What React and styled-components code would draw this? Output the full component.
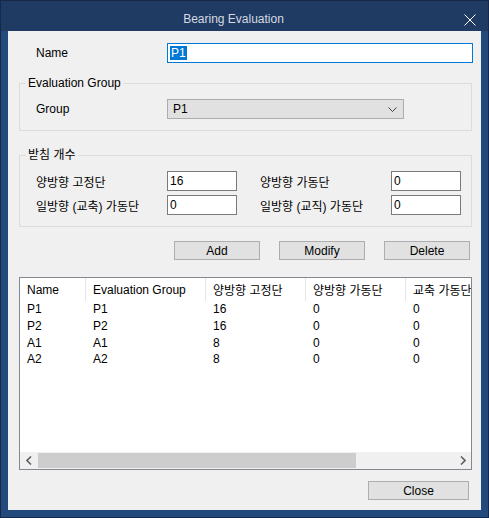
import styled, { createGlobalStyle } from 'styled-components';

const GlobalStyle = createGlobalStyle`
  html, body {
    margin: 0;
    padding: 0;
    background: #ffffff;
  }
  body {
    font-family: "Liberation Sans", "Noto Sans CJK KR", sans-serif;
    font-size: 12px;
    color: #000;
  }
`;

const Window = styled.div`
  width: 489px;
  height: 518px;
  box-sizing: border-box;
  border: 1px solid #16294a;
  background: #224a7c;
  display: flex;
  flex-direction: column;
`;

const TitleBar = styled.div`
  height: 30px;
  background: #1f3b64;
  display: flex;
  align-items: center;
  position: relative;
  padding-top: 5px;
  box-sizing: border-box;
`;

const Title = styled.div`
  flex: 1;
  text-align: center;
  color: #d6dae0;
  font-size: 12px;
  padding-right: 22px;
`;

const CloseX = styled.svg`
  position: absolute;
  right: 12px;
  top: 13px;
`;

const Body = styled.div`
  margin: 0 7px;
  height: 479px;
  background: #f0f0f0;
  display: flex;
  flex-direction: column;
`;

const NameRow = styled.div`
  display: grid;
  grid-template-columns: 131px 306px;
  align-items: center;
  margin-top: 12px;
  padding-left: 28px;
  height: 20px;
`;

const Label = styled.span`
  white-space: nowrap;
`;

const TextBox = styled.div`
  box-sizing: border-box;
  height: 20px;
  width: ${(p) => p.$w || 70}px;
  background: #fff;
  border: 1px solid ${(p) => (p.$focus ? '#0078d7' : '#7a7a7a')};
  display: flex;
  align-items: center;
  padding-left: 2px;
  line-height: 14px;
`;

const Selected = styled.span`
  background: #0078d7;
  color: #fff;
  padding: 0 1px;
`;

const GroupBox = styled.div`
  position: relative;
  margin: ${(p) => p.$top}px 0 0 11px;
  width: 453px;
  height: ${(p) => p.$h}px;
  box-sizing: border-box;
  border: 1px solid #dcdcdc;
  padding: 15px 0 0 16px;
`;

const Legend = styled.span`
  position: absolute;
  top: -8px;
  left: 6px;
  padding: 0 2px;
  line-height: 14px;
  background: #f0f0f0;
`;

const GroupRow = styled.div`
  display: grid;
  grid-template-columns: 131px 237px;
  align-items: center;
`;

const CountGrid = styled.div`
  display: grid;
  grid-template-columns: 131px 93px 131px 70px;
  row-gap: 4px;
  align-items: center;
`;

const Select = styled.div`
  box-sizing: border-box;
  height: 20px;
  background: #e1e1e1;
  border: 1px solid #adadad;
  display: flex;
  align-items: center;
  justify-content: space-between;
  padding: 0 6px 0 5px;
`;

const ButtonRow = styled.div`
  display: flex;
  justify-content: flex-end;
  gap: 19px;
  margin-top: 14px;
  padding-right: 11px;
`;

const Button = styled.div`
  box-sizing: border-box;
  width: ${(p) => p.$w || 86}px;
  height: 19px;
  background: #e1e1e1;
  border: 1px solid #adadad;
  display: flex;
  align-items: center;
  justify-content: center;
  line-height: 14px;
`;

const List = styled.div`
  margin: 17px 0 0 11px;
  width: 453px;
  height: 193px;
  box-sizing: border-box;
  border: 1px solid #828790;
  background: #fff;
  display: flex;
  flex-direction: column;
  overflow: hidden;
`;

const Columns = styled.div`
  display: grid;
  grid-template-columns: 66px 120px 100px 100px 100px;
  height: ${(p) => (p.$head ? 23 : 16.67)}px;
  align-items: center;
  white-space: nowrap;
`;

const Cell = styled.div`
  padding-left: 7px;
  height: 100%;
  display: flex;
  align-items: center;
  overflow: hidden;
  box-sizing: border-box;
  border-right: ${(p) => (p.$head ? '1px solid #e5e5e5' : 'none')};
`;

const Rows = styled.div`
  flex: 1;
`;

const ScrollBar = styled.div`
  display: grid;
  grid-template-columns: 17px 1fr 17px;
  height: 17px;
  background: #f0f0f0;
`;

const Arrow = styled.div`
  display: flex;
  align-items: center;
  justify-content: center;
`;

const Track = styled.div`
  padding: 1px 0 1px 1px;
  display: flex;
`;

const Thumb = styled.div`
  width: ${(p) => p.$w}px;
  background: #cdcdcd;
`;

const Footer = styled.div`
  display: flex;
  justify-content: flex-end;
  margin-top: 11px;
  padding-right: 12px;
`;

const rows = [
  ['P1', 'P1', '16', '0', '0'],
  ['P2', 'P2', '16', '0', '0'],
  ['A1', 'A1', '8', '0', '0'],
  ['A2', 'A2', '8', '0', '0'],
];

const headers = ['Name', 'Evaluation Group', '양방향 고정단', '양방향 가동단', '교축 가동단'];

export default function App() {
  return (
    <>
      <GlobalStyle />
      <Window>
        <TitleBar>
          <Title>Bearing Evaluation</Title>
          <CloseX width="12" height="12" viewBox="0 0 12 12">
            <path d="M0.5 0.5 L11.5 11.5 M11.5 0.5 L0.5 11.5" stroke="#ffffff" strokeWidth="1" fill="none" />
          </CloseX>
        </TitleBar>
        <Body>
          <NameRow>
            <Label>Name</Label>
            <TextBox $w={306} $focus>
              <Selected>P1</Selected>
            </TextBox>
          </NameRow>

          <GroupBox $top={20} $h={48}>
            <Legend>Evaluation Group</Legend>
            <GroupRow>
              <Label>Group</Label>
              <Select>
                <span>P1</span>
                <svg width="9" height="5" viewBox="0 0 9 5">
                  <polyline points="0.5,0.5 4.5,4.5 8.5,0.5" stroke="#404040" strokeWidth="1" fill="none" />
                </svg>
              </Select>
            </GroupRow>
          </GroupBox>

          <GroupBox $top={24} $h={72}>
            <Legend>받침 개수</Legend>
            <CountGrid>
              <Label>양방향 고정단</Label>
              <TextBox>16</TextBox>
              <Label>양방향 가동단</Label>
              <TextBox>0</TextBox>
              <Label>일방향 (교축) 가동단</Label>
              <TextBox>0</TextBox>
              <Label>일방향 (교직) 가동단</Label>
              <TextBox>0</TextBox>
            </CountGrid>
          </GroupBox>

          <ButtonRow>
            <Button>Add</Button>
            <Button>Modify</Button>
            <Button>Delete</Button>
          </ButtonRow>

          <List>
            <Columns $head>
              {headers.map((h) => (
                <Cell $head key={h}>{h}</Cell>
              ))}
            </Columns>
            <Rows>
              {rows.map((r) => (
                <Columns key={r[0]}>
                  {r.map((v, i) => (
                    <Cell key={i}>{v}</Cell>
                  ))}
                </Columns>
              ))}
            </Rows>
            <ScrollBar>
              <Arrow>
                <svg width="6" height="9" viewBox="0 0 6 9">
                  <polyline points="5,0.5 1,4.5 5,8.5" stroke="#606060" strokeWidth="1.6" fill="none" />
                </svg>
              </Arrow>
              <Track>
                <Thumb $w={318} />
              </Track>
              <Arrow>
                <svg width="6" height="9" viewBox="0 0 6 9">
                  <polyline points="1,0.5 5,4.5 1,8.5" stroke="#606060" strokeWidth="1.6" fill="none" />
                </svg>
              </Arrow>
            </ScrollBar>
          </List>

          <Footer>
            <Button $w={101}>Close</Button>
          </Footer>
        </Body>
      </Window>
    </>
  );
}
